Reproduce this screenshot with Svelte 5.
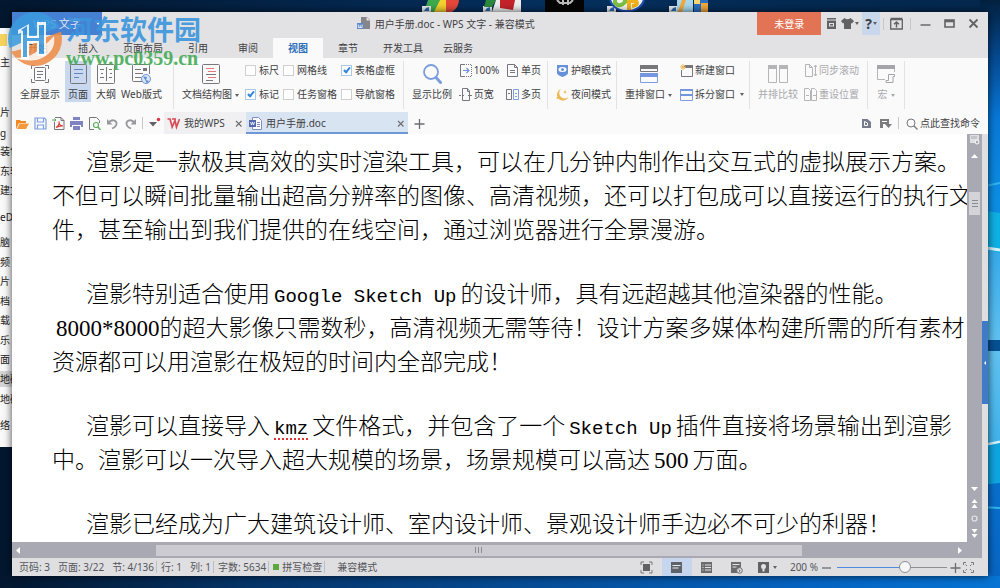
<script>
  let zoom = $state(63);
  let active = $state('视图');
  let checks = $state([
    { name: '标尺', on: false },
    { name: '网格线', on: false },
    { name: '表格虚框', on: true },
    { name: '标记', on: true },
    { name: '任务窗格', on: false },
    { name: '导航窗格', on: false }
  ]);

  const tabs = ['开始', '插入', '页面布局', '引用', '审阅', '视图', '章节', '开发工具', '云服务'];

  const folders = [
    ['片', 112], ['g', 133], ['装包', 151], ['东软', 171], ['建文', 190], ['eDr', 217],
    ['脑', 242], ['频', 262], ['片', 281], ['档', 301], ['载', 320], ['乐', 340],
    ['面', 359], ['地磁', 379], ['地磁', 399], ['络', 425]
  ];

  const g = 'fill="none" stroke="#77777b"';
  const b = 'fill="none" stroke="#7d9fe0"';
  const l = 'fill="none" stroke="#b5b5b8"';
  const icons = {
    full: `<path ${g} d="M1.5 5V1.5H5M15 1.5h3.5V5M18.5 15v3.500H15M5 18.500H1.500V15"/><rect x="4.500" y="3.500" width="11" height="13" rx="1" ${g}/><path ${g} d="M7 7.500h6M7 10.500h6M7 13.500h4"/>`,
    page: `<rect x="2.500" y=".500" width="16" height="19" rx="1" ${g}/><path fill="none" stroke="#6485bd" d="M6 5.500h9M6 9.500h9M6 13.500h5"/>`,
    outline: `<rect x="1.500" y=".500" width="17" height="19" rx="1" ${g}/><path ${g} d="M10.500 3v14M4 5.500h4M5 9.500h2M4 13.500h4M13 5.500h3M14 9.500h2M13 13.500h3"/>`,
    web: `<path ${g} d="M12 17.500H2.500a1 1 0 0 1-1-1V1.500a1 1 0 0 1 1-1h15a1 1 0 0 1 1 1V10M4 5.500h6M4 9.500h8M4 13.500h6"/><rect x="12" y="4" width="4" height="3" fill="#77777b"/><circle cx="15" cy="15" r="4.500" fill="#d9e5f8" stroke="#6f96d8"/><path d="M12 12.500l4 .5-1 3 3 1-2 2.500-2-4z" fill="#5f8bd0"/>`,
    struct: `<rect x="1.500" y=".500" width="17" height="19" rx="1" ${g}/><path fill="none" stroke="#e27c7c" d="M5 4.500h8M7 7.500h8M7 13.500h8"/><path ${g} d="M5 10.500h10M5 16.500h7"/>`,
    mag: `<circle cx="9" cy="8" r="7" fill="none" stroke="#7b9de0" stroke-width="1.800"/><path d="M14 13.500l4.500 5" stroke="#7b9de0" stroke-width="3" stroke-linecap="round"/>`,
    arrange: `<rect x="1" y="1" width="18" height="4" fill="#77777b"/><path ${g} d="M1.500 5v2.500h17V5"/><path fill="#7396df" d="M1 9h18v4H1z"/><path ${b} d="M1.500 13v5.500h17V13"/>`,
    compare: `<path ${l} d="M.500 1.500h8v17h-8zM11.500 1.500h8v17h-8z"/><path fill="#b5b5b8" d="M0 1h9v4H0zM11 1h9v4h-9z"/>`,
    macro: `<path ${l} d="M9 15.500H1.500V1.500h17V8"/><path fill="#a5a5a9" d="M1 1h18v4H1z"/><path fill="#fff" stroke="#a5a5a9" d="M12.500 10.500h6v2h-1.500v6h-7v-2h2.500z"/>`,
    s100: `<path ${g} d="M6 .500H1.500v12H6"/><path ${g} stroke-dasharray="1 1" d="M7 .500h5.500v12H7"/><path d="M4 6.500h6M7.500 4l2.500 2.500L7.500 9" fill="none" stroke="#6f93dd" stroke-width="1.200"/>`,
    width: `<path ${g} d="M3.500.500h5l2 2.500v9.500h-7zM8.500.500V3.500H11"/><path d="M0 7.500h5M13 7.500H9" ${g} stroke-dasharray="2 1"/>`,
    single: `<path ${g} d="M1.500.500h7l3 3v9h-10zM8.500.500v3h3M4 6.500h5M4 8.500h5"/>`,
    multi: `<path ${g} d="M.500 1.500h5v10h-5zM2 5.500h2"/><path ${b} d="M7.500 1.500h5v10h-5zM9 5.500h2M9 8.500h2"/>`,
    eye: `<path fill="#6790da" d="M1 1h11v8q0 2-5.500 4Q1 11 1 9z"/><ellipse cx="6.500" cy="5.500" rx="4" ry="2.500" fill="#fff"/><circle cx="6.500" cy="5.500" r="1.500" fill="#6790da"/>`,
    moon: `<path fill="#eeb955" d="M5 1a6 6 0 1 0 7.500 8A5 5 0 0 1 5 1zM9 2l.7 1.500 1.500.5-1.500.6L9 6l-.600-1.400L7 4l1.400-.500z"/><circle cx="1.500" cy="10" r="1" fill="#eeb955"/>`,
    neww: `<path ${g} d="M4 2.500h8.500v10h-11V6"/><path fill="#77777b" d="M5 1h8v3H5z"/><path stroke="#e9b24d" d="M3 0v6M0 3h6M1 1l4 4M5 1L1 5" stroke-width=".900"/>`,
    split: `<path ${b} d="M.500 1.500h12v11H.500zM.500 7.500h12"/><path d="M0 1h13v2H0zM0 6h13v2H0z" fill="#7396df"/>`,
    sync: `<path ${l} d="M1.500.500h4l3 3v9h-7zM5.500.500v3h3M11.500 1v11M10 3l1.500-2L13 3M10 10l1.500 2 1.500-2"/>`,
    reset: `<path ${l} d="M.500.500h4l2 2v10h-6zM7.500.500h3l2 2v10h-5zM2 7.500h3M9 7.500h3"/>`,
    open: `<path fill="#f08a24" d="M0 3h4l1 1h5v2H3l-3 6z"/><path fill="#f39a3c" d="M3.500 6.500H13L10 12H1z"/>`,
    save: `<path ${b} stroke-width="1.200" d="M1 1h9.500L12 2.500V12H1zM3.500 1v4h6V1M3.500 12V8h6v4"/>`,
    pdf: `<path ${g} d="M3 .500h6l3 3v9H2.500V5M9 .500v3h3"/><path fill="none" stroke="#d8443b" stroke-width="1.200" d="M4 10.500C7 9 7.500 6 7 4.500c0 3 1.500 4.500 4 4.500-3-.5-5 .5-7 1.500z"/><path stroke="#5aa55a" d="M0 3h4M2.500 1.500L4 3 2.500 4.500" fill="none"/>`,
    print: `<path fill="#7f84c0" d="M3 0h7v3H3zM0 4h13v6h-2V8H2v2H0zM3 9h7v4H3z"/>`,
    view: `<path ${g} d="M6 12.500H1.500V.500h7l3 3V6"/><circle cx="8" cy="8" r="2.500" fill="none" stroke="#5fae5f" stroke-width="1.200"/><path d="M10 10l2.500 3" stroke="#5fae5f" stroke-width="1.500"/>`,
    undo: `<path fill="none" stroke="#98989c" stroke-width="1.800" d="M3 5C7 1.500 11 4 10.500 7 10.300 9 8.500 10.500 6 11.500"/><path fill="#98989c" d="M1 2v5.500h5.500z"/>`,
    redo: `<path fill="none" stroke="#98989c" stroke-width="1.800" d="M10 5C6 1.500 2 4 2.500 7 2.700 9 4.500 10.500 7 11.500"/><path fill="#98989c" d="M12 2v5.500H6.500z"/>`,
    more: `<path fill="#626266" d="M1 5h8l-4 4.500z"/><circle cx="10.500" cy="2.500" r="1.700" fill="#d9343e"/>`,
    wps: `<path d="M.500 2H3l2.200 8L8 3.500 9.500 10 12.500 2M5 2h4" fill="none" stroke="#d94a54" stroke-width="1.700"/>`,
    doc: `<path fill="#fff" stroke="#7f8fc4" d="M3.500.500h6l3 3v9h-9z"/><path fill="#5468ae" d="M0 3h7v7H0z"/><path d="M1.500 5l1 3 1-3 1 3 1-3" fill="none" stroke="#fff" stroke-width=".800"/><path d="M8 5.500h3M8 7.500h3M8 9.500h3" stroke="#7f8fc4"/>`,
    docs: `<path fill="#85858a" d="M4 0h6l3 3v9H4z"/><path fill="#e3e3e5" d="M9.500 0v3.500H13"/><path fill="#5e87c8" d="M0 6h6.500v6H0z"/><path d="M1.300 7.500v3h3.800v-3M3.200 8v2" fill="none" stroke="#fff" stroke-width=".800"/>`,
    plus: `<path d="M6.500 2v10M1.500 7h10" stroke="#6d6d70" stroke-width="1.300"/>`,
    close: `<path d="M4 4l5.500 5.500M9.500 4L4 9.500" stroke="#6d6d70" stroke-width="1.100"/>`,
    dd: `<path fill="#777c8c" d="M2 2h5.500L11 5v6H2z"/><path fill="none" stroke="#fff" d="M4.500 4.500v4h3V6z"/>`,
    flag: `<path fill="#7b7b7f" d="M1 2h9v5H4v4H1zM6 7h7l-3.500 4z"/><path stroke="#fff" d="M3 4.500h5"/>`,
    find: `<circle cx="6" cy="6" r="4" fill="none" stroke="#77777b"/><path d="M9 9l3.500 3.500" stroke="#77777b" stroke-width="1.200"/>`,
    inbox: `<path fill="#626266" d="M2 1h9v1.500H2zM2 3.500h9V12H2z"/><path fill="#e3e3e5" d="M4 6h5v3.500H4z"/><path fill="#626266" d="M5 7h3v1.500H5z"/>`,
    shirt: `<path fill="#626266" d="M3.500 1Q6.500 3.500 9.500 1L13 4l-2 2.500-1-.5v6H3V6l-1 .500L0 4z"/>`,
    pin: `<path d="M.700 2.500h11.600v9.500H.700zM.700 1.500h11.600" fill="none" stroke="#626266" stroke-width="1.300"/><path d="M6.500 10.500V5M4 7.300L6.500 5 9 7.300" fill="none" stroke="#626266" stroke-width="1.500"/>`,
    min: `<path d="M1.500 8h10" stroke="#626266" stroke-width="1.400"/>`,
    max: `<path d="M2 3h9v7H2zM2 4.500h9" fill="none" stroke="#626266" stroke-width="1.600"/>`,
    quit: `<path d="M2.500 2.500l8 8M10.500 2.500l-8 8" stroke="#626266" stroke-width="1.800"/>`,
    minus: `<path d="M2 7h9" stroke="#6d6d70" stroke-width="1.300"/>`,
    sfull: `<path fill="#626266" d="M3 3h7v7H3z"/><path d="M1 4V1h3M9 1h3v3M12 9v3H9M4 12H1V9" fill="none" stroke="#77777b"/>`,
    spage: `<path fill="#5f6369" d="M1 1h11v11H1z"/><path d="M2.500 4.500h8M2.500 7h6" stroke="#e6ebf3" stroke-width="1.200"/>`,
    slist: `<path fill="#6b6b6f" d="M1 1h11v11H1z"/><path d="M2.500 4h1M5 4h6M2.500 6.500h1M5 6.500h6M2.500 9h1M5 9h6" stroke="#e3e3e5"/>`,
    sweb: `<path fill="#6b6b6f" d="M1 1h10v5L7 12H1z"/><path d="M2.500 3.500h7M2.500 6h4" stroke="#e3e3e5"/><circle cx="9.500" cy="9.500" r="2.800" fill="#e3e3e5" stroke="#6b6b6f"/><path d="M8.500 8l2 1.500-1 2z" fill="#6b6b6f"/>`,
    sbulb: `<path fill="#626266" d="M1 1h11v11H1z"/><circle cx="6.500" cy="5.500" r="2.500" fill="#e3e3e5"/><path fill="#e3e3e5" d="M5.500 7h2v3.500h-2z"/>`,
    sexp: `<path d="M1.500 4V1.500H4M9 1.500h2.500V4M11.500 9v2.500H9M4 11.500H1.500V9M5 5L3.500 3.500M8 5l1.500-1.500M5 8L3.500 9.500M8 8l1.500 1.500" fill="none" stroke="#77777b"/>`,
    palette: `<path fill="#dedee3" d="M2 1h9v8H2z"/><path d="M4 2v3M6 2v3M8 2v3" stroke="#a9a9b3"/><circle cx="9" cy="8" r="2" fill="#a9a9b3" stroke="#fff"/>`,
    up: `<path fill="#fff" d="M3 9h7L6.500 5z"/>`,
    down: `<path fill="#fff" d="M3 5h7L6.500 9z"/>`,
    dup: `<path fill="#fff" d="M3.500 6h6l-3-4zM3.500 11h6l-3-4z"/>`,
    ring: `<circle cx="6.500" cy="6.500" r="2.500" fill="none" stroke="#e6e6ea" stroke-width="1.200"/>`,
    ddown: `<path fill="#fff" d="M3.500 2h6l-3 4zM3.500 7h6l-3 4z"/>`,
    left: `<path fill="#fff" d="M4 6.500L8 3v7z"/>`,
    right: `<path fill="#fff" d="M9 6.500L5 3v7z"/>`
  };
</script>

{#snippet ico(name)}<svg class="ico" viewBox="0 0 13 13" aria-hidden="true">{@html icons[name]}</svg>{/snippet}
{#snippet big(name, label, arrow = false, cls = '')}
  <button class="big {cls}">
    <svg class="bigico" viewBox="0 0 20 20" aria-hidden="true">{@html icons[name]}</svg>
    <span class="lab">{label}{#if arrow}<i class="caret"></i>{/if}</span>
  </button>
{/snippet}
{#snippet small(name, label, arrow = false)}
  <button class="small">{@render ico(name)}<span>{label}</span>{#if arrow}<i class="caret"></i>{/if}</button>
{/snippet}

<div class="desktop" lang="zh-CN">
  <svg class="wall" viewBox="0 0 20 588" preserveAspectRatio="none" aria-hidden="true">
    <defs>
      <linearGradient id="sky" x1="0" y1="0" x2="0" y2="1">
        <stop offset="0" stop-color="#03213f" /><stop offset=".1" stop-color="#064b94" />
        <stop offset=".2" stop-color="#0878d8" /><stop offset=".34" stop-color="#0b8fe4" />
        <stop offset="1" stop-color="#0765c4" />
      </linearGradient>
      <linearGradient id="pane" x1="0" y1="0" x2="0" y2="1">
        <stop offset="0" stop-color="#35aaeb" /><stop offset=".5" stop-color="#62c3f2" /><stop offset="1" stop-color="#3fb2ea" />
      </linearGradient>
    </defs>
    <rect width="20" height="588" fill="url(#sky)" />
    <path d="M0 248l20 4v88H0zM0 351h20v91l-20 4z" fill="url(#pane)" />
    <path d="M0 340h20v11H0z" fill="#065093" />
    <path d="M0 210l20 3v40l-20-6z" fill="#0fb1e4" />
    <path d="M0 247l20 3M0 446l20-4" stroke="#d5f3fb" stroke-width="3" />
    <path d="M0 447l20-4v40l-20 2z" fill="#0fa5e0" />
    <path d="M0 187l20-4M0 507l20 1" stroke="#32b5ee" stroke-width="2" />
  </svg>

  <svg class="shortcuts" viewBox="0 0 300 12" aria-hidden="true">
    <path fill="#3daa4e" d="M4 12L8 0h14l2 12z" /><path fill="#f4d12e" d="M14 12L20 0h12l-4 12z" /><path fill="#e4483a" d="M26 0h13q0 7-7 12h-6z" />
    <path fill="#e9ecef" d="M2 6h9v6H2zM63 6h9v6h-9zM187 6h9v6h-9zM249 6h9v6h-9z" />
    <path fill="#2b6cb0" d="M4 11l2-3 3-1v4zM65 11l2-3 3-1v4zM189 11l2-3 3-1v4zM251 11l2-3 3-1v4z" />
    <path fill="#2c8a3c" d="M66 0h10l-4 7h-8z" /><path fill="#eee" d="M76 0h25v12H72z" /><path fill="#c4232b" d="M80 0h15l-2 10-13-2z" />
    <path fill="#050505" d="M125 0h39v12h-39z" /><path d="M137 0l3 3h10l3-3M143 0v5M148 0v5" stroke="#bbb" stroke-width="2" fill="none" />
    <ellipse cx="207" cy="-2" rx="17" ry="13" fill="#f4f7f2" stroke="#1f4fb4" stroke-width="2" />
    <path fill="none" stroke="#7bc043" stroke-width="4" d="M195-1v4q5 5 10-1V0" /><path fill="none" stroke="#f1b21c" stroke-width="4" d="M209 10V1h7q3 4-4 5" />
    <path fill="#a8d8ee" d="M257 0h16v12h-16z" /><path fill="#f1a93c" d="M262 0h4l-4 12h-4zM281 3h7v9h-7z" /><path fill="#2d6fc1" d="M274 0h7v5h-7zM281 0h7v3h-7zM274 5h7v7h-7z" /><path fill="#f7d774" d="M274 0h6v4h-6z" />
  </svg>

  <aside class="explorer" aria-label="文件夹">
    <span class="cap"></span>
    <span class="item" style="top: 26px">主</span>
    {#each folders as [name, y]}
      <span class="item" class:sel={y === 379} style="top: {y - 36}px">{name}</span>
    {/each}
  </aside>

  <main class="window">
    <header class="title">
      <button class="app">WPS 文字<i class="caret"></i></button>
      <div class="name">{@render ico('docs')}<span>用户手册.doc - WPS 文字 - 兼容模式</span></div>
      <button class="login">未登录</button>
      <div class="tools">
        <button aria-label="消息">{@render ico('inbox')}</button>
        <button aria-label="皮肤">{@render ico('shirt')}<i class="caret"></i></button>
        <button class="help" aria-label="帮助"><b>?</b><i class="caret"></i></button>
        <i class="bar"></i>
        <button class="pin" aria-label="隐藏功能区">{@render ico('pin')}</button>
        <i class="bar"></i>
      </div>
      <div class="winbtns">
        <button aria-label="最小化">{@render ico('min')}</button>
        <button aria-label="最大化">{@render ico('max')}</button>
        <button aria-label="关闭">{@render ico('quit')}</button>
      </div>
    </header>

    <nav class="tabs">
      {#each tabs as t}
        <button class:on={active === t} class:wide={t.length > 2} onclick={() => (active = t)}>{t}</button>
      {/each}
    </nav>

    <section class="ribbon">
      <div class="group g1">
        {@render big('full', '全屏显示')}
        {@render big('page', '页面', false, 'sel')}
        {@render big('outline', '大纲')}
        {@render big('web', 'Web版式')}
      </div>
      <div class="group g2">
        {@render big('struct', '文档结构图', true)}
        <div class="checks">
          {#each checks as c}
            <label><input type="checkbox" bind:checked={c.on} />{c.name}</label>
          {/each}
        </div>
      </div>
      <div class="group g3">
        {@render big('mag', '显示比例')}
        <div class="col">{@render small('s100', '100%')}{@render small('width', '页宽')}</div>
        <div class="col">{@render small('single', '单页')}{@render small('multi', '多页')}</div>
      </div>
      <div class="group g4">
        <div class="col">{@render small('eye', '护眼模式')}{@render small('moon', '夜间模式')}</div>
      </div>
      <div class="group g5">
        {@render big('arrange', '重排窗口', true)}
        <div class="col">{@render small('neww', '新建窗口')}{@render small('split', '拆分窗口', true)}</div>
      </div>
      <div class="group g6 off">
        {@render big('compare', '并排比较')}
        <div class="col">{@render small('sync', '同步滚动')}{@render small('reset', '重设位置')}</div>
      </div>
      <div class="group g7 off">{@render big('macro', '宏', true)}</div>
    </section>

    <section class="quick">
      <div class="qicons">
        {#each [['open', '打开'], ['save', '保存'], ['pdf', '输出PDF'], ['print', '打印'], ['view', '预览'], ['undo', '撤销'], ['redo', '恢复']] as [n, t]}
          <button aria-label={t}>{@render ico(n)}</button>
        {/each}
        <i class="bar"></i>
        <button aria-label="更多">{@render ico('more')}</button>
      </div>
      <div class="doctab home">{@render ico('wps')}<span>我的WPS</span><button aria-label="关闭我的WPS">{@render ico('close')}</button></div>
      <div class="doctab cur">{@render ico('doc')}<span>用户手册.doc</span><button aria-label="关闭文档">{@render ico('close')}</button></div>
      <button class="add" aria-label="新建">{@render ico('plus')}</button>
      <div class="cmd">
        <button aria-label="文档">{@render ico('dd')}</button>
        <button aria-label="标记">{@render ico('flag')}</button>
        <i class="bar"></i>
        <button class="search">{@render ico('find')}<span>点此查找命令</span></button>
      </div>
    </section>

    <section class="work">
      <article class="paper">
        <p>渲影是一款极其高效的实时渲染工具，可以在几分钟内制作出交互式的虚拟展示方案。<br />不但可以瞬间批量输出超高分辨率的图像、高清视频，还可以打包成可以直接运行的执行文<br />件，甚至输出到我们提供的在线空间，通过浏览器进行全景漫游。</p>
        <p>渲影特别适合使用<span class="lat">Google Sketch Up</span>的设计师，具有远超越其他渲染器的性能。<br /><span class="num">8000*8000</span>的超大影像只需数秒，高清视频无需等待！设计方案多媒体构建所需的所有素材<br />资源都可以用渲影在极短的时间内全部完成！</p>
        <p>渲影可以直接导入<span class="lat err">kmz</span>文件格式，并包含了一个<span class="lat">Sketch Up</span>插件直接将场景输出到渲影<br />中。渲影可以一次导入超大规模的场景，场景规模可以高达<span class="num gap">500</span>万面。</p>
        <p>渲影已经成为广大建筑设计师、室内设计师、景观设计师手边必不可少的利器！</p>
      </article>
      <div class="vbar">
        {@render ico('palette')}{@render ico('up')}
        <span class="vthumb"></span>
        <span class="grow"></span>
        {@render ico('down')}{@render ico('dup')}{@render ico('ring')}{@render ico('ddown')}
      </div>
      <div class="side"><button aria-label="展开任务窗格"></button></div>
    </section>
    <div class="hbar">
      {@render ico('left')}<span class="hthumb"></span>{@render ico('right')}
    </div>

    <footer class="status">
      <span>页码: 3</span><span>页面: 3/22</span><span>节: 4/136</span><i class="bar"></i>
      <span>行: 1</span><span>列: 1</span><i class="bar"></i>
      <span>字数: 5634</span><i class="bar"></i>
      <span class="spell"><i class="dot"></i>拼写检查</span><i class="bar"></i>
      <span class="compat">兼容模式</span>
      <div class="views">
        <button aria-label="全屏">{@render ico('sfull')}</button>
        <button class="on" aria-label="页面视图">{@render ico('spage')}</button>
        <button aria-label="大纲视图">{@render ico('slist')}</button>
        <button aria-label="Web视图">{@render ico('sweb')}</button>
        <button aria-label="护眼">{@render ico('sbulb')}<i class="caret"></i></button>
      </div>
      <span class="pct">200 %</span>
      <button aria-label="缩小">{@render ico('minus')}</button>
      <input class="zoom" type="range" min="0" max="100" bind:value={zoom} aria-label="显示比例" style="--v: {zoom}%" />
      <button aria-label="放大">{@render ico('plus')}</button>
      <button aria-label="适应窗口">{@render ico('sexp')}</button>
    </footer>
  </main>

  <div class="mark">
    <svg viewBox="0 0 56 56" aria-hidden="true">
      <clipPath id="disc"><circle cx="28" cy="28" r="27" /></clipPath>
      <g clip-path="url(#disc)">
        <path fill="#3a9add" d="M0 0h56v16Q38 20 22 28T0 38z" />
        <path fill="#ee8b45" d="M0 41q14-1 26-8t30-13v36H0z" />
        <path fill="#fff" d="M4 46q14 3 25-5t18-16q2 14-10 21T4 46z" opacity=".85" />
      </g>
      <path fill="#fff" d="M11 19l11-6v35H14V22l-3 1zM30 11h9v34h-9zM21 25h10v7H21z" />
      <path fill="#3a9add" d="M14 19l6-4v31h-4V20zM32 14h5v29h-5zM20 27h12v3H20z" />
    </svg>
    <div><strong>河东软件园</strong><em>www.pc0359.cn</em></div>
  </div>
</div>

<style>
  :global(body) { margin: 0; }
  .desktop {
    position: relative; box-sizing: border-box; min-height: 100vh; padding: 12px; overflow: hidden;
    display: flex; background: linear-gradient(90deg, #03172f, #05305f 55%, #042a52 80%, #04284e);
    font: 10px/16px "Noto Sans", "Noto Sans CJK SC", sans-serif; color: #3e3e42;
  }
  .desktop::after {
    content: ""; position: absolute; left: 0; right: 0; bottom: 0; height: 12px;
    background: linear-gradient(90deg, #03172f, #053468 25%, #064a91 50%, #0563c0 80%, #0674d4);
  }
  .wall { position: absolute; right: 0; top: 0; width: 20px; height: 100%; }
  .shortcuts { position: absolute; left: 420px; top: 0; width: 300px; height: 12px; }
  .explorer { position: absolute; left: 0; top: 28px; width: 14px; height: 419px; background: #fafafa; overflow: hidden; color: #222; }
  .item { position: absolute; left: 0; width: 14px; white-space: nowrap; }
  .item.sel { background: #d5d5d7; }
  .cap { position: absolute; left: 0; top: 6px; width: 7px; height: 12px; background: #f5d55f; }
  button { font: inherit; color: inherit; background: none; border: 0; padding: 0; margin: 0; display: flex; align-items: center; white-space: nowrap; }
  .ico { width: 13px; height: 13px; flex: none; display: block; }
  .caret { border: 2px solid transparent; border-top: 3px solid #626266; border-bottom: 0; margin-left: 3px; display: inline-block; vertical-align: middle; }
  .bar { width: 1px; height: 12px; background: #c6c6ca; flex: none; }

  .window {
    position: relative; z-index: 1; flex: 1; min-width: 0; display: flex; flex-direction: column;
    background: #fafafb; box-shadow: 0 0 8px #000b;
  }
  .title { height: 26px; background: #e2e2e5; display: flex; align-items: flex-start; }
  .title > * { height: 23px; }
  .app { width: 90px; padding-left: 21px; background: #4680d2; color: #dfe9f8; font-size: 11px; }
  .app .caret { border-top-color: #fff; margin-left: 15px; }
  .name { flex: 1; display: flex; align-items: center; gap: 5px; justify-content: center; padding-left: 32px; }
  .login { width: 64px; background: #e27355; color: #fff; justify-content: center; }
  .tools { display: flex; align-items: center; gap: 3px; padding-left: 4px; }
  .tools button { height: 23px; }
  .tools .caret { margin-left: 1px; }
  .tools .help { background: #c9d7ec; padding: 0 3px; font-size: 14px; }
  .tools .pin { margin: 0 4px 0 3px; }
  .winbtns { display: flex; align-items: center; gap: 11px; padding: 0 8px; }

  .tabs { height: 20px; background: #e2e2e5; display: flex; padding-left: 1px; }
  .tabs button { padding: 0 15px; }
  .tabs button.wide { padding: 0 10px; }
  .tabs button.on { background: #fafafb; color: #2f6fb8; font-weight: 700; }

  .ribbon { height: 54px; display: flex; box-sizing: border-box; padding-top: 3px; }
  .group { box-sizing: border-box; height: 48px; display: flex; align-items: flex-start; justify-content: space-between; padding: 0 8px; border-right: 1px solid #e2e2e5; }
  .g1 { width: 162px; justify-content: flex-start; gap: 5px; } .g2 { width: 230px; } .g3 { width: 144px; padding-right: 6px; } .g4 { width: 69px; padding-right: 4px; }
  .g5 { width: 133px; padding-right: 5px; } .g6 { width: 118px; } .g7 { width: 37px; }
  .big { flex-direction: column; gap: 2px; padding-top: 3px; height: 41px; }
  .big.sel { background: #c9d8ef; padding: 3px 3px 0; }
  .bigico { width: 20px; height: 20px; flex: none; }
  .lab { height: 16px; }
  .off { color: #a9a9ad; }
  .off .caret { border-top-color: #a9a9ad; }
  .col { display: flex; flex-direction: column; gap: 8px; padding-top: 1px; }
  .small { height: 16px; gap: 2px; }
  .checks { display: grid; grid-template-columns: 38px 58px 54px; row-gap: 8px; padding-top: 1px; }
  .checks label { display: flex; align-items: center; gap: 3px; height: 16px; white-space: nowrap; }
  .checks input { appearance: none; margin: 0; width: 11px; height: 11px; box-sizing: border-box; border: 1px solid #cfcfd2; background: #fff; flex: none; }
  .checks input:checked { border-color: #aac8e8; position: relative; }
  .checks input:checked::after { content: ""; position: absolute; left: 3px; top: 0; width: 2px; height: 5px; border: solid #2f86d8; border-width: 0 2px 2px 0; transform: rotate(40deg); }

  .quick { height: 22px; display: flex; align-items: stretch; }
  .qicons { display: flex; align-items: center; gap: 5px; padding: 0 3px 0 4px; }
  .doctab { display: flex; align-items: center; gap: 4px; box-sizing: border-box; padding: 2px 1px 0 3px; border-bottom: 2px solid transparent; }
  .doctab button { margin-left: auto; }
  .home { width: 82px; background: #f0f0f2; }
  .cur { width: 162px; background: #d9e4f3; border-bottom-color: #6f97d6; }
  .add { padding-left: 5px; }
  .cmd { margin-left: auto; display: flex; align-items: center; gap: 6px; padding-right: 8px; }
  .search { gap: 2px; }

  .work { flex: 1; display: flex; background: #fff; }
  .paper { flex: 1; min-width: 0; overflow: hidden; padding: 9px 0 0 40px; white-space: nowrap; font: 300 23px/34px "Noto Sans CJK SC", sans-serif; color: #000; }
  .paper p { margin: 0 0 30px; text-indent: 34px; }
  .paper p:last-child { margin: 0; }
  .lat { font: 400 19px/20px "Liberation Mono", monospace; margin: 0 4px; }
  .num { font: 400 23px/20px "Liberation Serif", serif; margin-left: 4px; }
  .gap { margin-right: 4px; }
  .err { text-decoration: underline dotted #d33 2px; text-underline-offset: 4px; }
  .vbar { width: 15px; background: #a9a9b3; display: flex; flex-direction: column; align-items: center; gap: 2px; padding-bottom: 2px; }
  .vthumb { width: 11px; height: 23px; margin-top: 28px; background: linear-gradient(#8b8b94 0 0) center 8px / 6px 1px no-repeat, linear-gradient(#8b8b94 0 0) center 11px / 6px 1px no-repeat, linear-gradient(#8b8b94 0 0) center 14px / 6px 1px no-repeat, #d3d3d8; }
  .grow { flex: 1; }
  .side { width: 6px; background: #dfdfe2; display: flex; flex-direction: column; padding-top: 187px; }
  .side button { height: 83px; background: #417ac6; justify-content: center; }
  .side button::after { content: ""; border: 2px solid transparent; border-right-color: #fff; border-left: 0; }
  .hbar { height: 16px; display: flex; align-items: center; background: #a9a9b3; margin-right: 6px; padding: 0 16px 0 0; box-shadow: 6px 0 #dfdfe2; }
  .hthumb { flex: 0 1 646px; height: 11px; margin-left: 131px; margin-right: auto; background: linear-gradient(90deg, #8b8b94 1px, transparent 1px 3px, #8b8b94 3px 4px, transparent 4px 6px, #8b8b94 6px 7px, transparent 7px) center / 8px 6px no-repeat, #cbcbd1; }

  .status { height: 18px; background: #dfdfe2; display: flex; align-items: center; padding: 0 13px 0 7px; color: #55555a; white-space: nowrap; }
  .status > span { margin-right: 8px; }
  .status .bar { margin-left: -6px; margin-right: 4px; background: #bdbdc2; }
  .spell { display: flex; align-items: center; gap: 3px; }
  .dot { width: 6px; height: 6px; background: #5fa63d; }
  .compat { padding-left: 8px; }
  .views { display: flex; margin-left: auto; }
  .views button { height: 18px; width: 30px; justify-content: center; }
  .views .on { background: #c6d6ee; }
  .status .pct { margin: 0 2px 0 8px; }
  .zoom { appearance: none; width: 110px; height: 13px; margin: 0 2px 0 4px; background: linear-gradient(90deg, #4f8bdc var(--v), #8e8e93 var(--v)) center / 100% 1px no-repeat; }
  .zoom::-webkit-slider-thumb { appearance: none; width: 12px; height: 12px; border-radius: 50%; background: #f6f6f7; border: 1px solid #8c8c92; }

  .mark { position: absolute; z-index: 2; left: 7px; top: 11px; display: flex; gap: 3px; pointer-events: none; }
  .mark svg { width: 56px; height: 56px; opacity: .85; }
  .mark div { display: flex; flex-direction: column; }
  .mark strong { font: 700 27px/36px "Noto Sans CJK SC", sans-serif; color: #3b95dc; opacity: .9; }
  .mark em { font: bold 20px/22px "Liberation Serif", serif; color: #45ab55; opacity: .9; }
</style>
